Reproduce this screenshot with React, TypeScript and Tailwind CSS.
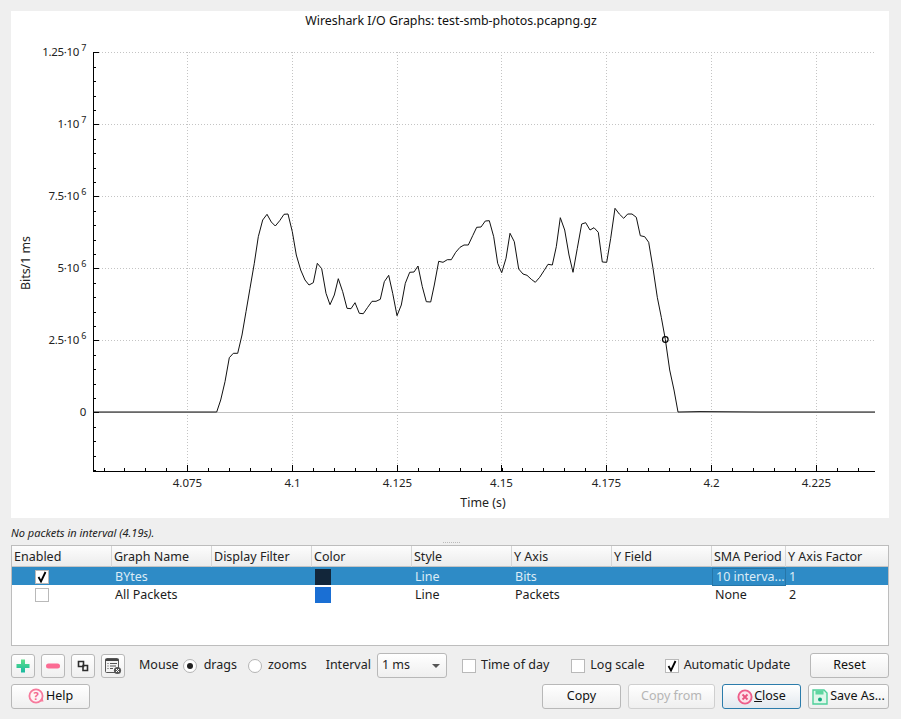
import React from 'react';

const font = '"Noto Sans", "Open Sans", sans-serif';

// trace traced off the reference, in page coordinates
const trace: [number, number][] = [
  [93, 412], [216.7, 412], [220.7, 400], [225, 381.7], [229.3, 357.7], [233.3, 353.3], [237.7, 353.3], [242, 335], [246, 311.7], [250, 288.3],
  [254.3, 263.3], [258.3, 236.7], [262.7, 220], [267, 214.3], [271.3, 222], [275.3, 226], [279.7, 220.7], [284, 214.3], [288, 214], [292.3, 231.7],
  [296.3, 255], [300.7, 270], [305, 280], [309, 285], [313.3, 282.7], [317.3, 263.3], [321.7, 268.7], [326, 293.3], [330, 304.7], [334.3, 295],
  [338.3, 278.7], [342.7, 291.7], [347, 308.3], [351, 308.7], [355, 302.7], [359.3, 313.3], [363.3, 313.7], [367.7, 307.3], [372, 301.3], [376, 301.3],
  [380.3, 299.3], [384.3, 281.7], [388.7, 275.3], [392.7, 293.3], [397, 315.7], [401.3, 305], [405.3, 283.3], [409.7, 272.3], [414, 272], [418, 266],
  [422.3, 286.7], [426.3, 301.7], [430.7, 302], [434.3, 285], [438.7, 261.3], [443, 262.3], [447.3, 259.7], [451.3, 259.7], [455.7, 252.3], [460, 247.3],
  [464, 245], [468.3, 245], [472.7, 235.7], [476.7, 227.3], [481, 227], [485.3, 221], [489.3, 220.7], [493.7, 236.7], [497.7, 263.3], [501.7, 272.7],
  [506, 258.3], [510, 233.3], [514.3, 241.7], [518.7, 269], [523, 274], [527, 275.3], [531.3, 279.3], [535.3, 282.3], [539.7, 277.3], [544, 270.7],
  [548, 264.3], [552.3, 265], [556.3, 246.7], [560.3, 217.7], [564.7, 230], [569, 255], [573, 272.3], [577.3, 248.3], [581.7, 224], [585.7, 222.7],
  [590, 230], [594, 227.7], [598.3, 232.3], [602.3, 262], [606.7, 262.3], [610.7, 238.3], [615, 208.3], [619.3, 214], [623.7, 218.3], [627.7, 214],
  [632, 214], [636.3, 217.3], [640.3, 235.7], [644.7, 236.7], [648.7, 242.3], [653, 268.3], [657.3, 297.3], [661.3, 317.3], [665.3, 339.3], [669.7, 370],
  [674, 390], [678, 412], [700, 411.6], [760, 412], [875, 412],
];

const yMajor = [
  { y: 52, base: '1.25·10', exp: '7' },
  { y: 124, base: '1·10', exp: '7' },
  { y: 196, base: '7.5·10', exp: '6' },
  { y: 268, base: '5·10', exp: '6' },
  { y: 340, base: '2.5·10', exp: '6' },
  { y: 412, base: '0', exp: '' },
];
const xMajor = [
  { x: 187.5, label: '4.075' },
  { x: 292.5, label: '4.1' },
  { x: 397.5, label: '4.125' },
  { x: 501.5, label: '4.15' },
  { x: 606.5, label: '4.175' },
  { x: 711.5, label: '4.2' },
  { x: 816.5, label: '4.225' },
];

function Plot() {
  const yMinor: number[] = [];
  for (let i = 0; i < 30; i++) {
    const y = 52.5 + i * 14.4;
    if (i % 5 !== 0) yMinor.push(Math.round(y) + 0.5);
  }
  const xMinor: number[] = [];
  for (let x = 103.5; x < 875; x += 20.95) xMinor.push(Math.round(x) + 0.5);

  return (
    <svg viewBox="11 11 878 507" className="block h-full w-full" style={{ fontFamily: font }}>
      <text x="451" y="25" textAnchor="middle" fontSize="12.4" fill="#111">Wireshark I/O Graphs: test-smb-photos.pcapng.gz</text>
      {yMajor.slice(0, 5).map((t) => (
        <line key={t.y} x1="93" x2="875" y1={t.y + 0.5} y2={t.y + 0.5} stroke="#c4c4c4" strokeDasharray="1 2" />
      ))}
      {xMajor.map((t) => (
        <line key={t.x} x1={t.x} x2={t.x} y1="52" y2="471" stroke="#c4c4c4" strokeDasharray="1 2" />
      ))}
      <line x1="93" x2="875" y1="412.5" y2="412.5" stroke="#c0c0c0" />
      <line x1="93.5" x2="93.5" y1="52" y2="472" stroke="#000" />
      <line x1="93" x2="875" y1="471.5" y2="471.5" stroke="#000" />
      {yMajor.map((t) => (
        <g key={t.y}>
          <line x1="93" x2="99" y1={t.y + 0.5} y2={t.y + 0.5} stroke="#000" />
          <text x="86" y={t.y + 4} textAnchor="end" fontSize="11.5" letterSpacing="-0.3" fill="#222">
            {t.base}
            {t.exp && <tspan dy="-5" dx="2" fontSize="9">{t.exp}</tspan>}
          </text>
        </g>
      ))}
      {yMinor.map((y) => (
        <line key={y} x1="93" x2="96" y1={y} y2={y} stroke="#000" />
      ))}
      {xMajor.map((t) => (
        <g key={t.x}>
          <line x1={t.x} x2={t.x} y1="465" y2="471" stroke="#000" />
          <text x={t.x} y="487" textAnchor="middle" fontSize="11.5" fill="#222">{t.label}</text>
        </g>
      ))}
      {xMinor.map((x) => (
        <line key={x} x1={x} x2={x} y1="468" y2="471" stroke="#000" />
      ))}
      <text x="483" y="507" textAnchor="middle" fontSize="12.4" fill="#222">Time (s)</text>
      <text transform="translate(30 263) rotate(-90)" textAnchor="middle" fontSize="12.4" fill="#222">Bits/1 ms</text>
      <polyline points={trace.map((p) => p.join(',')).join(' ')} fill="none" stroke="#111" strokeWidth="1" strokeLinejoin="round" />
      <circle cx="665.3" cy="339.5" r="2.8" fill="none" stroke="#000" strokeWidth="1.2" />
    </svg>
  );
}

const columns = ['Enabled', 'Graph Name', 'Display Filter', 'Color', 'Style', 'Y Axis', 'Y Field', 'SMA Period', 'Y Axis Factor'];
const cols = 'grid grid-cols-[100px_100px_100px_100px_100px_100px_100px_74px_1fr]';

const rows = [
  { on: true, name: 'BYtes', color: 'bg-[#12263a]', style: 'Line', axis: 'Bits', sma: '10 interva...', factor: '1' },
  { on: false, name: 'All Packets', color: 'bg-[#1a6fd4]', style: 'Line', axis: 'Packets', sma: 'None', factor: '2' },
];

function Check({ on, className = '' }: { on: boolean; className?: string }) {
  return (
    <span className={`flex h-[14px] w-[14px] shrink-0 items-center justify-center border border-[#b9b9b9] bg-white ${className}`}>
      {on && (
        <svg viewBox="0 0 12 12" className="h-[12px] w-[12px]">
          <path d="M2.5 6 L5 10.5 L9.5 1" fill="none" stroke="#000" strokeWidth="1.8" />
        </svg>
      )}
    </span>
  );
}

function Radio({ on }: { on: boolean }) {
  return (
    <span className="flex h-[14px] w-[14px] shrink-0 items-center justify-center rounded-full border border-[#b4b4b4] bg-white">
      {on && <span className="h-[6px] w-[6px] rounded-full bg-[#222]" />}
    </span>
  );
}

function GraphTable() {
  return (
    <div className="h-[101px] border border-[#bdbdbd] bg-white text-[12.5px]">
      <div className={`${cols} h-[21px] border-b border-[#c4c4c4] bg-gradient-to-b from-[#fdfdfd] to-[#ececec] text-[#222]`}>
        {columns.map((c, i) => (
          <div key={c} className={`flex items-center pl-[2px] pt-[2px] ${i < 8 ? 'border-r border-[#d6d6d6]' : ''}`}>{c}</div>
        ))}
      </div>
      {rows.map((r, i) => {
        const text = i === 0 ? 'text-[#dcecf6]' : 'text-[#1c1c1c]';
        return (
          <div key={r.name} className={`${cols} h-[18px] items-center ${i === 0 ? 'bg-[#2e8bc6]' : 'bg-white'} ${text}`}>
            <div className="flex pl-[23px]"><Check on={r.on} /></div>
            <div className="pl-[3px] pt-[1px]">{r.name}</div>
            <div />
            <div className="flex pl-[3px]"><span className={`h-[16px] w-[16px] ${r.color}`} /></div>
            <div className="pl-[3px] pt-[1px]">{r.style}</div>
            <div className="pl-[3px] pt-[1px]">{r.axis}</div>
            <div />
            <div className={`flex h-[18px] items-center pl-[3px] pt-[1px] ${i === 0 ? 'border border-[#2676a8]' : ''}`}>{r.sma}</div>
            <div className="pl-[3px] pt-[1px]">{r.factor}</div>
          </div>
        );
      })}
    </div>
  );
}

function Btn({ w, children, variant }: { w: string; children: React.ReactNode; variant?: 'focus' | 'off' }) {
  const look =
    variant === 'focus'
      ? 'border-[#2b7cab] to-[#e2e8ee] text-[#111]'
      : variant === 'off'
        ? 'border-[#cfcfcf] to-[#efefef] text-[#b5b5b5]'
        : 'border-[#b8b8b8] to-[#efefef] text-[#111]';
  return (
    <div className={`flex h-[25px] shrink-0 items-center justify-center gap-[1px] rounded-[3px] border bg-gradient-to-b from-white ${look} ${w}`}>
      {children}
    </div>
  );
}

function IconBtn({ children }: { children: React.ReactNode }) {
  return (
    <div className="flex h-[24px] w-[24px] shrink-0 items-center justify-center rounded-[3px] border border-[#b8b8b8] bg-gradient-to-b from-white to-[#efefef]">
      {children}
    </div>
  );
}

function PlusIcon() {
  return (
    <svg viewBox="0 0 16 16" className="h-[16px] w-[16px]">
      <defs>
        <linearGradient id="plus" x1="0" y1="0" x2="0" y2="1">
          <stop offset="0" stopColor="#5fe08a" />
          <stop offset="1" stopColor="#17b8a0" />
        </linearGradient>
      </defs>
      <path d="M6 1.5h4v4.5h4.5v4H10v4.5H6V10H1.5V6H6z" fill="url(#plus)" />
    </svg>
  );
}

function MinusIcon() {
  return (
    <svg viewBox="0 0 16 16" className="h-[16px] w-[16px]">
      <rect x="1" y="5.5" width="14" height="5" rx="2.5" fill="#fb6b93" />
    </svg>
  );
}

function CopyIcon() {
  return (
    <svg viewBox="0 0 12 12" className="h-[12px] w-[12px]">
      <path d="M1.5 1.5h5v5h-5z M6 5.5h4.5v5H6z" fill="none" stroke="#2c2c2c" strokeWidth="1.6" />
    </svg>
  );
}

function ClearIcon() {
  return (
    <svg viewBox="0 0 18 18" className="h-[18px] w-[18px]">
      <rect x="1.5" y="1.5" width="13" height="14" rx="1" fill="#f4f4f4" stroke="#555" />
      <path d="M1.5 3h13" stroke="#444" strokeWidth="2" />
      <path d="M3.5 6.5h1M6 6.5h7M3.5 9h1M6 9h6M3.5 11.5h1M6 11.5h3" stroke="#555" />
      <circle cx="13.5" cy="13.5" r="3.6" fill="#555" />
      <path d="M12 12l3 3M15 12l-3 3" stroke="#fff" strokeWidth="1" />
    </svg>
  );
}

function HelpIcon() {
  return (
    <svg viewBox="0 0 17 17" className="h-[17px] w-[17px] shrink-0">
      <circle cx="8" cy="8" r="6.6" fill="#fff3f6" stroke="#f77a9c" strokeWidth="1.8" />
      <path d="M11 13.5h4.5l-1-3.5z" fill="#f77a9c" />
      <text x="8" y="12" textAnchor="middle" fontSize="11" fontWeight="700" fill="#f2688f">?</text>
    </svg>
  );
}

function CloseIcon() {
  return (
    <svg viewBox="0 0 16 16" className="h-[16px] w-[16px] shrink-0">
      <circle cx="8" cy="8" r="6.6" fill="#fde2ea" stroke="#ee5f8b" strokeWidth="1.9" />
      <path d="M5.5 5.5l5 5M10.5 5.5l-5 5" stroke="#e8547f" strokeWidth="1.8" />
    </svg>
  );
}

function SaveIcon() {
  return (
    <svg viewBox="0 0 16 16" className="h-[16px] w-[16px] shrink-0">
      <path d="M1 1h11l3 3v11H1z" fill="#dff7ea" stroke="#4fd09a" strokeWidth="1.4" />
      <rect x="3.5" y="1.5" width="8" height="4" fill="#5fd6a0" />
      <circle cx="8" cy="10.5" r="2" fill="#12a87e" />
    </svg>
  );
}

export default function App() {
  return (
    <div className="flex h-[719px] w-[901px] flex-col overflow-hidden bg-[#efefef] pl-[11px] pr-[12px] pt-[11px] text-[12.5px] text-[#222]" style={{ fontFamily: font }}>
      <div className="h-[507px] shrink-0 bg-white">
        <Plot />
      </div>
      <div className="mt-[9px] flex h-[12px] items-center text-[11px] italic text-[#222]">No packets in interval (4.19s).</div>
      <div className="flex h-[6px] items-center justify-center gap-[1px] pl-[3px]">
        {[0, 1, 2, 3, 4, 5, 6, 7, 8].map((i) => (
          <span key={i} className="h-[1px] w-[1px] bg-[#bbbbbb]" />
        ))}
      </div>
      <GraphTable />
      <div className="mt-[7px] flex h-[25px] items-center">
        <div className="flex gap-[6px]">
          <IconBtn><PlusIcon /></IconBtn>
          <IconBtn><MinusIcon /></IconBtn>
          <IconBtn><CopyIcon /></IconBtn>
          <IconBtn><ClearIcon /></IconBtn>
        </div>
        <span className="ml-[14px]">Mouse</span>
        <span className="ml-[4px]"><Radio on /></span>
        <span className="ml-[7px]">drags</span>
        <span className="ml-[11px]"><Radio on={false} /></span>
        <span className="ml-[6px]">zooms</span>
        <span className="ml-[19px]">Interval</span>
        <div className="ml-[6px] flex h-[25px] w-[70px] items-center justify-between rounded-[3px] border border-[#b8b8b8] bg-gradient-to-b from-white to-[#efefef] pl-[4px] pr-[6px]">
          1 ms
          <span className="h-0 w-0 border-x-[4px] border-t-[4px] border-x-transparent border-t-[#555]" />
        </div>
        <Check on={false} className="ml-[15px]" />
        <span className="ml-[5px]">Time of day</span>
        <Check on={false} className="ml-[22px]" />
        <span className="ml-[5px]">Log scale</span>
        <Check on className="ml-[20px]" />
        <span className="ml-[5px]">Automatic Update</span>
        <div className="ml-auto">
          <Btn w="w-[79px]">Reset</Btn>
        </div>
      </div>
      <div className="mt-[6px] flex items-center">
        <Btn w="w-[79px]"><HelpIcon />Help</Btn>
        <div className="ml-auto flex gap-[7px]">
          <Btn w="w-[79px]">Copy</Btn>
          <Btn w="w-[87px]" variant="off">Copy from</Btn>
          <Btn w="w-[79px]" variant="focus"><CloseIcon /><span><span className="underline">C</span>lose</span></Btn>
          <Btn w="w-[81px]"><SaveIcon /><span className="ml-[1px]">Save As...</span></Btn>
        </div>
      </div>
    </div>
  );
}
